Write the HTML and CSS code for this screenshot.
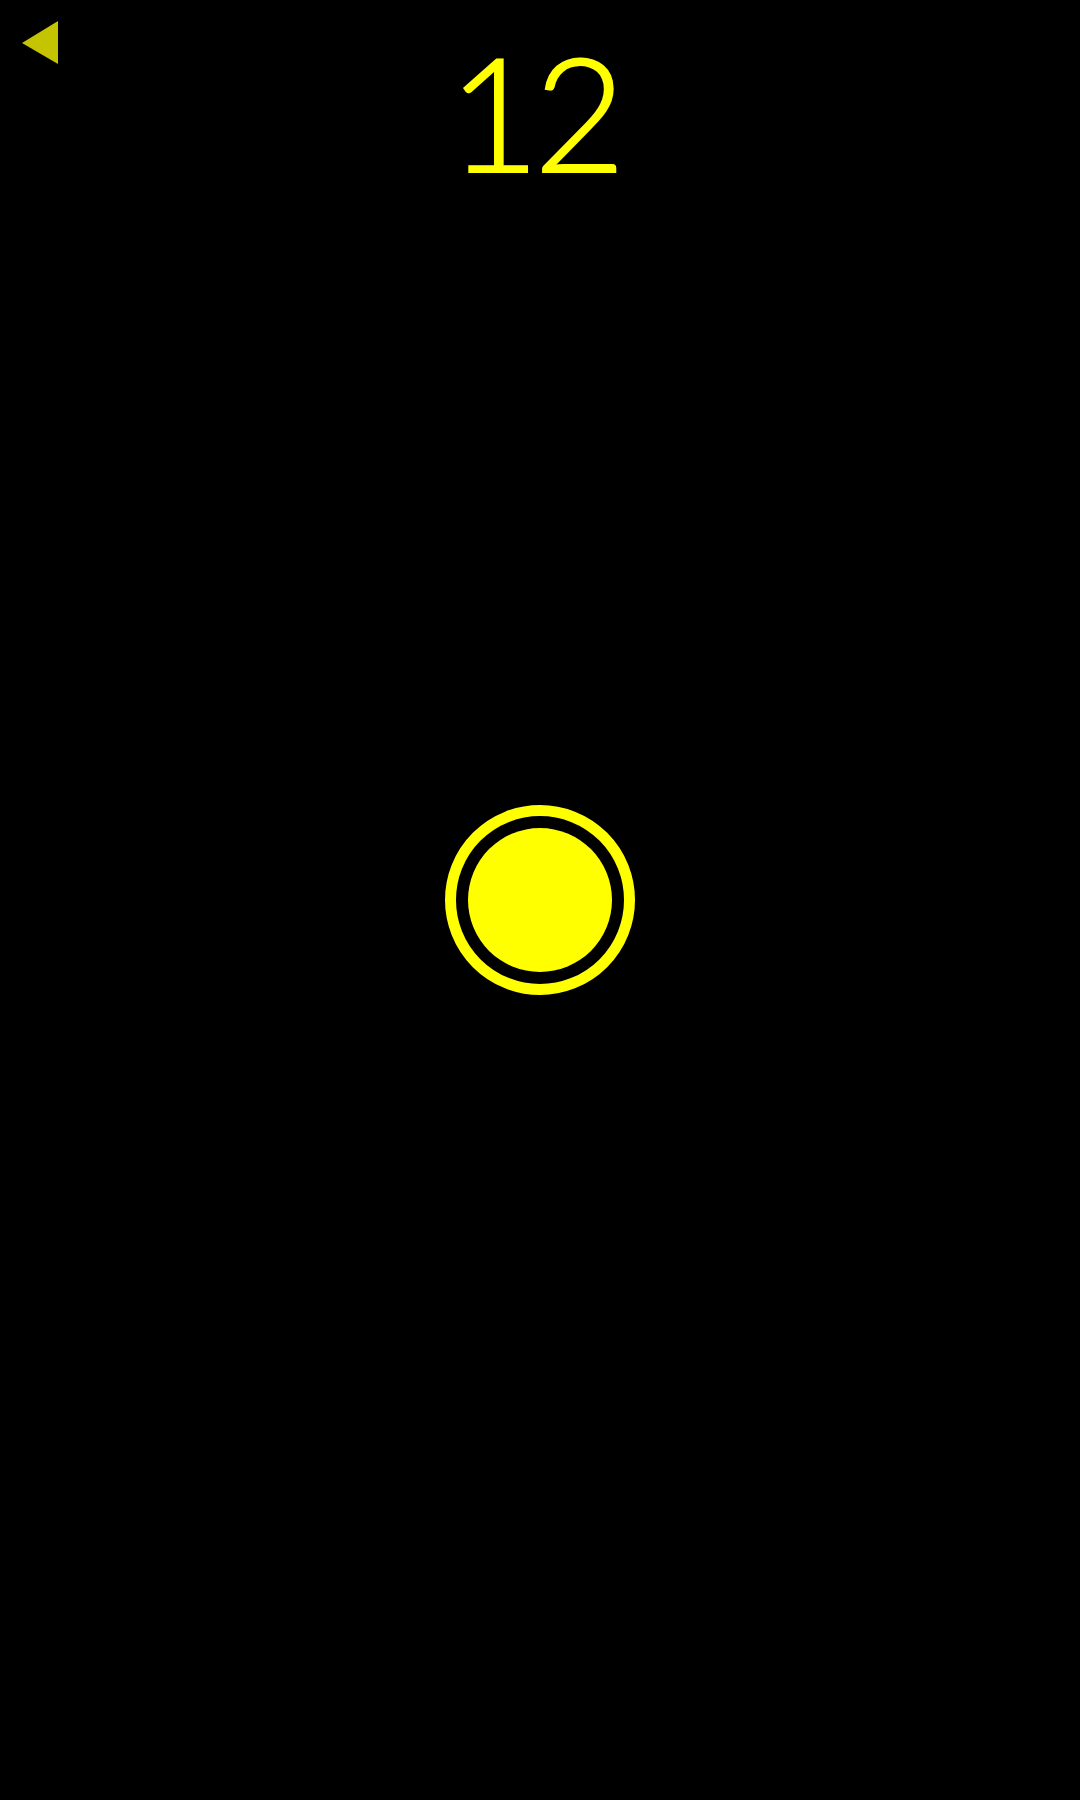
FILE: index.html
```html
<!DOCTYPE html>
<html>
<head>
<meta charset="utf-8">
<link rel="stylesheet" href="styles.css">
</head>
<body>
<div class="screen">
  <header class="top">
    <button class="back" aria-label="Back">
      <svg width="36" height="43" viewBox="0 0 36 43"><polygon points="0,22 36,0 36,43" fill="#c4c400"/></svg>
    </button>
    <div class="count">12</div>
    <div class="spacer"></div>
  </header>
  <main class="stage">
    <div class="target"><div class="dot"></div></div>
  </main>
  <div class="bottom"></div>
</div>
</body>
</html>
```
FILE: styles.css
```css
html, body {
  margin: 0;
  padding: 0;
  background: #000;
}
.screen {
  height: 1800px;
  display: flex;
  flex-direction: column;
}
.top {
  height: 200px;
  display: grid;
  grid-template-columns: 1fr auto 1fr;
  align-items: start;
}
.back {
  justify-self: start;
  background: none;
  border: 0;
  padding: 21px 0 0 22px;
  margin: 0;
  line-height: 0;
}
.count {
  font-family: "Lato", "DejaVu Sans", sans-serif;
  font-weight: 300;
  font-size: 158px;
  line-height: 1;
  color: #ffff00;
  -webkit-text-stroke: 2px #ffff00;
  letter-spacing: -6px;
  padding-top: 32px;
  padding-right: 12px;
}
.stage {
  flex: 1;
  display: flex;
  align-items: center;
  justify-content: center;
}
.bottom {
  height: 200px;
}
.target {
  width: 168px;
  height: 168px;
  border: 11px solid #ffff00;
  border-radius: 50%;
  display: flex;
  align-items: center;
  justify-content: center;
}
.dot {
  width: 144px;
  height: 144px;
  border-radius: 50%;
  background: #ffff00;
}
```
